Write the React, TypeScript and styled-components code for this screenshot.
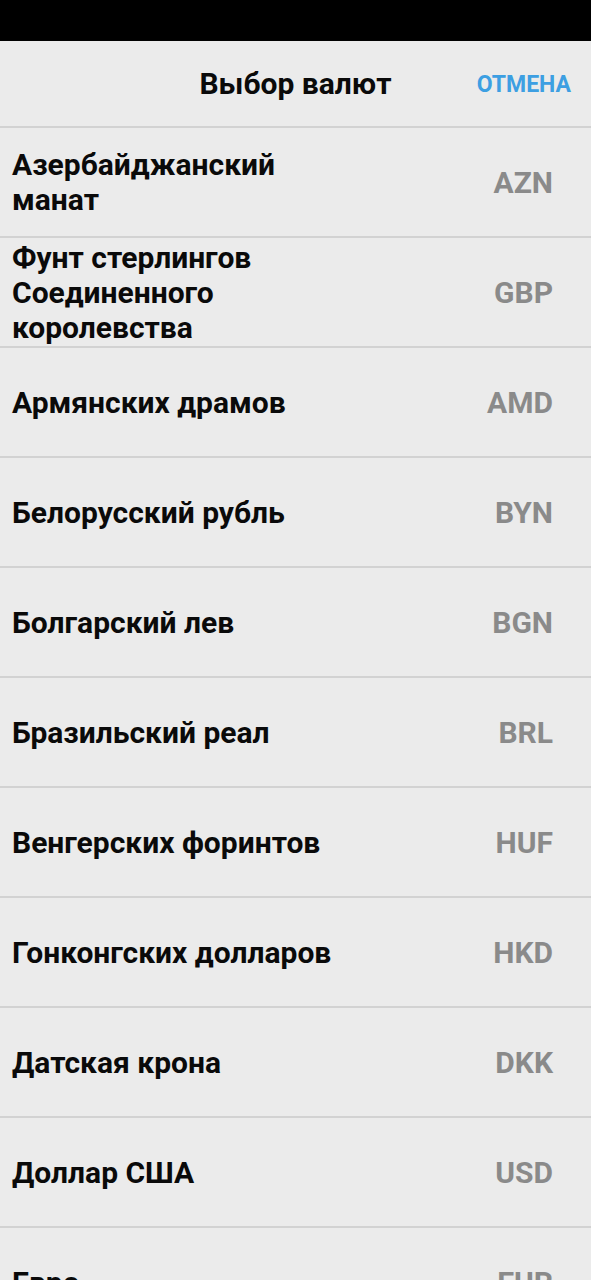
import React from "react";
import styled, { createGlobalStyle } from "styled-components";

const Global = createGlobalStyle`
  html, body { margin: 0; padding: 0; background: #ebebeb; }
  body { font-family: Roboto, "Noto Sans", sans-serif; overflow: hidden; }
`;

const StatusBar = styled.div`
  height: 41px;
  background: #000;
`;

const Header = styled.header`
  position: relative;
  height: 85px;
  display: flex;
  align-items: center;
  justify-content: center;
  border-bottom: 2px solid #d2d2d2;
`;

const Title = styled.h1`
  margin: 0;
  font-size: 30px;
  font-weight: 700;
  color: #0a0a0a;
`;

const Cancel = styled.button`
  position: absolute;
  right: 20px;
  top: 50%;
  transform: translateY(-50%);
  background: none;
  border: none;
  padding: 0;
  font-family: inherit;
  font-size: 23px;
  font-weight: 700;
  color: #3d9fe2;
`;

const List = styled.ul`
  list-style: none;
  margin: 0;
  padding: 0;
`;

const Row = styled.li`
  height: 108px;
  display: flex;
  align-items: center;
  justify-content: space-between;
  padding: 0 38px 0 12px;
  border-bottom: 2px solid #d2d2d2;
`;

const Name = styled.span`
  max-width: 335px;
  font-size: 30px;
  line-height: 35px;
  font-weight: 700;
  color: #0a0a0a;
`;

const Code = styled.span`
  font-size: 30px;
  font-weight: 700;
  color: #8a8a8a;
`;

const items: [string, string][] = [
  ["Азербайджанский манат", "AZN"],
  ["Фунт стерлингов Соединенного королевства", "GBP"],
  ["Армянских драмов", "AMD"],
  ["Белорусский рубль", "BYN"],
  ["Болгарский лев", "BGN"],
  ["Бразильский реал", "BRL"],
  ["Венгерских форинтов", "HUF"],
  ["Гонконгских долларов", "HKD"],
  ["Датская крона", "DKK"],
  ["Доллар США", "USD"],
  ["Евро", "EUR"],
];

export default function App() {
  return (
    <>
      <Global />
      <StatusBar />
      <Header>
        <Title>Выбор валют</Title>
        <Cancel>ОТМЕНА</Cancel>
      </Header>
      <List>
        {items.map(([n, c]) => (
          <Row key={c}>
            <Name>{n}</Name>
            <Code>{c}</Code>
          </Row>
        ))}
      </List>
    </>
  );
}
